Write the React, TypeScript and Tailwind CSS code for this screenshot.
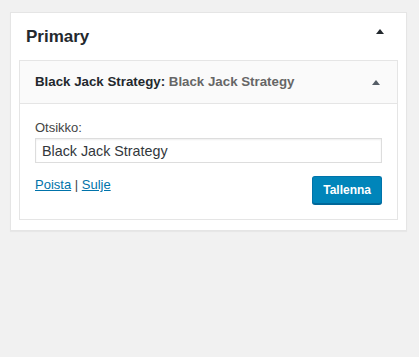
import React from "react";

function Caret({ color }: { color: string }) {
  return (
    <svg width="8" height="5" viewBox="0 0 8 5" className="block">
      <path d="M0 5 L4 0 L8 5 Z" fill={color} />
    </svg>
  );
}

export default function App() {
  return (
    <div className="min-h-[357px] w-full bg-[#f1f1f1] pt-[12px] pl-[10px] font-['Liberation_Sans',Arial,sans-serif]">
      <div className="w-[397px] border border-[#e5e5e5] bg-white px-[8px] pb-[10px] shadow-[0_1px_1px_rgba(0,0,0,0.04)]">
        <div className="-mx-[8px] flex items-start justify-between pl-[15px] pr-[22px]">
          <h2 className="py-[13px] text-[17px] font-bold leading-[21px] text-[#23282d]">Primary</h2>
          <div className="mt-[16px]">
            <Caret color="#23282d" />
          </div>
        </div>

        <div className="border border-[#e5e5e5] bg-white">
          <div className="flex h-[43px] items-center justify-between border-b border-[#e5e5e5] bg-[#fafafa] pl-[15px] pr-[17px]">
            <h3 className="text-[13.3px] font-bold leading-[16px] text-[#23282d]">
              Black Jack Strategy: <span className="text-[#666]">Black Jack Strategy</span>
            </h3>
            <Caret color="#555d66" />
          </div>

          <div className="px-[15px] pt-[16px] pb-[15px]">
            <label className="block text-[13px] leading-[16px] text-[#444]">Otsikko:</label>
            <input
              type="text"
              defaultValue="Black Jack Strategy"
              className="mt-[2px] block h-[25px] w-full border border-[#ddd] bg-white px-[6px] text-[14.3px] leading-[20px] text-[#32373c] shadow-[inset_0_1px_2px_rgba(0,0,0,0.07)] outline-none"
            />
            <div className="mt-[13px] flex items-start justify-between">
              <div className="text-[13px] leading-[18px] text-[#444]">
                <a href="#" className="text-[#0073aa] underline">Poista</a>
                {" | "}
                <a href="#" className="text-[#0073aa] underline">Sulje</a>
              </div>
              <button className="h-[28px] rounded-[3px] border border-[#0073aa] border-b-[#006799] bg-[#0085ba] px-[10px] text-[12px] font-bold leading-[26px] text-white shadow-[0_1px_0_#006799]">
                Tallenna
              </button>
            </div>
          </div>
        </div>
      </div>
    </div>
  );
}
